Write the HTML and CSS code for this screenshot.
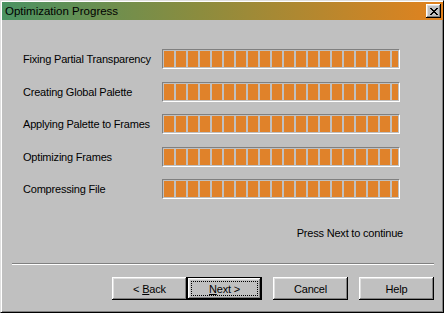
FILE: index.html
```html
<!DOCTYPE html>
<html lang="en">

<head>
    <meta charset="UTF-8" />
    <title>Optimization Progress</title>
    <link rel="stylesheet" href="styles.css">
</head>

<body>
    <div class="window">
        <div class="titlebar">
            <span class="title">Optimization Progress</span>
            <button class="closeBtn" aria-label="Close">
                <svg width="8" height="7" viewBox="0 0 8 7">
                    <path d="M0 0h2v1h1v1h2v-1h1v-1h2v1h-1v1h-1v1h-1v1h1v1h1v1h1v1h-2v-1h-1v-1h-2v1h-1v1h-2v-1h1v-1h1v-1h1v-1h-1v-1h-1v-1h-1z" fill="#000" />
                </svg>
            </button>
        </div>

        <div class="content">
            <div class="rows">
                <div class="row">
                    <span class="label">Fixing Partial Transparency</span>
                    <div class="bar"></div>
                </div>
                <div class="row">
                    <span class="label">Creating Global Palette</span>
                    <div class="bar"></div>
                </div>
                <div class="row">
                    <span class="label">Applying Palette to Frames</span>
                    <div class="bar"></div>
                </div>
                <div class="row">
                    <span class="label">Optimizing Frames</span>
                    <div class="bar"></div>
                </div>
                <div class="row">
                    <span class="label">Compressing File</span>
                    <div class="bar"></div>
                </div>
            </div>

            <p class="hint">Press Next to continue</p>

            <div class="separator"></div>

            <div class="buttons">
                <div class="pair">
                    <button class="btn">&lt; <u>B</u>ack</button>
                    <button class="btn default"><span class="focus"><u>N</u>ext &gt;</span></button>
                </div>
                <button class="btn">Cancel</button>
                <button class="btn">Help</button>
            </div>
        </div>
    </div>
</body>

</html>
```

FILE: styles.css
```css
body {
    margin: 0;
    padding: 0;
    font-family: "Liberation Sans", Arial, sans-serif;
    font-size: 11px;
    letter-spacing: -0.2px;
    color: #000;
    background: #c0c0c0;
}

.window {
    box-sizing: border-box;
    width: 444px;
    height: 313px;
    padding: 1px 0 0 0;
    background: #c0c0c0;
    border: 1px solid;
    border-color: #dfdfdf #000 #000 #dfdfdf;
    box-shadow: inset 1px 1px #fff, inset -1px -1px #808080;
}

/* title bar */
.titlebar {
    display: flex;
    align-items: center;
    justify-content: space-between;
    height: 18px;
    margin: 0 0 0 1px;
    background: linear-gradient(to right, rgb(74, 146, 98), rgb(140, 140, 62) 45%, rgb(226, 130, 30));
}

.title {
    padding-left: 3px;
    font-size: 11.5px;
    letter-spacing: 0;
    line-height: 18px;
}

.closeBtn {
    display: flex;
    align-items: center;
    justify-content: center;
    box-sizing: border-box;
    width: 15px;
    height: 14px;
    margin-right: 2px;
    padding: 0;
    border: none;
    background: #c0c0c0;
    box-shadow: inset -1px -1px #000, inset 1px 1px #fff, inset -2px -2px #808080, inset 2px 2px #dfdfdf;
}

/* progress rows */
.content {
    padding-top: 29px;
}

.rows {
    display: flex;
    flex-direction: column;
    gap: 12.5px;
    padding-left: 22px;
}

.row {
    display: flex;
    align-items: center;
    height: 20px;
}

.label {
    width: 139px;
}

.bar {
    box-sizing: border-box;
    width: 238px;
    height: 20px;
    padding: 1px;
    border: 1px solid;
    border-color: #808080 #fff #fff #808080;
    background: repeating-linear-gradient(to right, #e0822a 0 10px, #c0c0c0 10px 12px) content-box;
}

.hint {
    margin: 28px 0 0;
    padding-right: 40px;
    text-align: right;
    line-height: 13px;
}

.separator {
    height: 0;
    margin: 23px 9px 0 11px;
    border-top: 1px solid #808080;
    border-bottom: 1px solid #fff;
}

/* buttons */
.buttons {
    display: flex;
    justify-content: flex-end;
    gap: 11px;
    margin-top: 12px;
    padding-right: 9px;
}

.pair {
    display: flex;
}

.btn {
    box-sizing: border-box;
    width: 75px;
    height: 23px;
    padding: 0;
    border: none;
    font-family: inherit;
    font-size: 11px;
    letter-spacing: -0.2px;
    color: #000;
    background: #c0c0c0;
    box-shadow: inset -1px -1px #000, inset 1px 1px #fff, inset -2px -2px #808080, inset 2px 2px #dfdfdf;
}

.btn.default {
    border: 1px solid #000;
}

.focus {
    display: flex;
    align-items: center;
    justify-content: center;
    height: 13px;
    margin: 0 3px;
    border: 1px dotted #000;
}
```
